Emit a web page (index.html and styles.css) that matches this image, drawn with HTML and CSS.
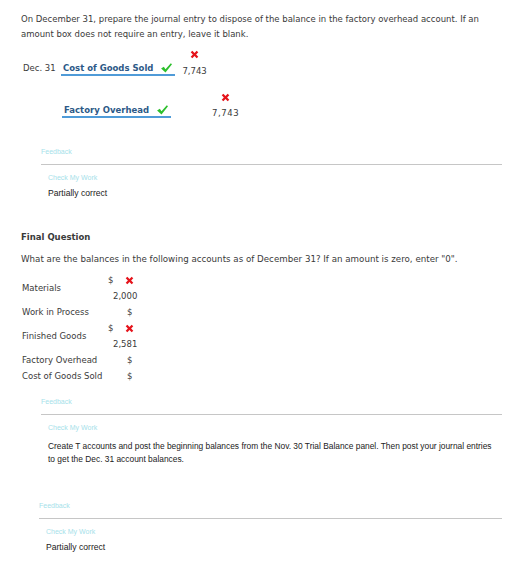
FILE: index.html
```html
<!DOCTYPE html>
<html lang="en">
<head>
    <meta charset="UTF-8">
    <title>Journal Entry</title>
    <link rel="stylesheet" href="styles.css">
</head>
<body>
    <div class="page">
        <p class="prompt">On December 31, prepare the journal entry to dispose of the balance in the factory overhead account. If an amount box does not require an entry, leave it blank.</p>

        <div class="journal">
            <div class="entry">
                <span class="date">Dec. 31</span>
                <span class="account">Cost of Goods Sold
                    <svg class="check" viewBox="0 0 14 12"><path d="M0.5 6.5 L3.8 4.6 L5.8 7.6 L12.2 0.4 L13.6 1.6 L5.8 11.5 Z"/></svg>
                </span>
                <span class="amount">
                    <svg class="wrong" viewBox="0 0 10 10"><path d="M0.8 2.6 L2.6 0.8 L5 3.2 L7.4 0.8 L9.2 2.6 L6.8 5 L9.2 7.4 L7.4 9.2 L5 6.8 L2.6 9.2 L0.8 7.4 L3.2 5 Z"/></svg>
                    <span class="figure">7,743</span>
                </span>
            </div>
            <div class="entry credit">
                <span class="account">Factory Overhead
                    <svg class="check" viewBox="0 0 14 12"><path d="M0.5 6.5 L3.8 4.6 L5.8 7.6 L12.2 0.4 L13.6 1.6 L5.8 11.5 Z"/></svg>
                </span>
                <span class="amount">
                    <svg class="wrong" viewBox="0 0 10 10"><path d="M0.8 2.6 L2.6 0.8 L5 3.2 L7.4 0.8 L9.2 2.6 L6.8 5 L9.2 7.4 L7.4 9.2 L5 6.8 L2.6 9.2 L0.8 7.4 L3.2 5 Z"/></svg>
                    <span class="figure spaced">7,743</span>
                </span>
            </div>
        </div>

        <div class="feedback">
            <div class="feedback-title">Feedback</div>
            <div class="feedback-body">
                <div class="check-work">Check My Work</div>
                <p>Partially correct</p>
            </div>
        </div>

        <h2 class="question-title">Final Question</h2>
        <p class="prompt question">What are the balances in the following accounts as of December 31? If an amount is zero, enter "0".</p>

        <div class="balances">
            <div class="label">Materials</div>
            <div class="cell">
                <span class="line"><span class="dollar">$</span><svg class="wrong" viewBox="0 0 10 10"><path d="M0.8 2.6 L2.6 0.8 L5 3.2 L7.4 0.8 L9.2 2.6 L6.8 5 L9.2 7.4 L7.4 9.2 L5 6.8 L2.6 9.2 L0.8 7.4 L3.2 5 Z"/></svg></span>
                <span class="value">2,000</span>
            </div>
            <div class="label">Work in Process</div>
            <div class="cell plain"><span class="dollar">$</span></div>
            <div class="label">Finished Goods</div>
            <div class="cell">
                <span class="line"><span class="dollar">$</span><svg class="wrong" viewBox="0 0 10 10"><path d="M0.8 2.6 L2.6 0.8 L5 3.2 L7.4 0.8 L9.2 2.6 L6.8 5 L9.2 7.4 L7.4 9.2 L5 6.8 L2.6 9.2 L0.8 7.4 L3.2 5 Z"/></svg></span>
                <span class="value">2,581</span>
            </div>
            <div class="label">Factory Overhead</div>
            <div class="cell plain"><span class="dollar">$</span></div>
            <div class="label">Cost of Goods Sold</div>
            <div class="cell plain"><span class="dollar">$</span></div>
        </div>

        <div class="feedback hint">
            <div class="feedback-title">Feedback</div>
            <div class="feedback-body">
                <div class="check-work">Check My Work</div>
                <p class="hint-text">Create T accounts and post the beginning balances from the Nov. 30 Trial Balance panel. Then post your journal entries to get the Dec. 31 account balances.</p>
            </div>
        </div>

        <div class="feedback last">
            <div class="feedback-title">Feedback</div>
            <div class="feedback-body">
                <div class="check-work">Check My Work</div>
                <p>Partially correct</p>
            </div>
        </div>
    </div>
</body>
</html>
```

FILE: styles.css
```css
body {
    margin: 0;
    background-color: #fff;
    color: #3a3a3a;
    font-family: 'DejaVu Sans', Verdana, sans-serif;
    font-size: 8.5px;
}

.page {
    padding: 12px 30px 0 21px;
}

.prompt {
    margin: 0;
    line-height: 15px;
}

/* journal entry rows */
.journal {
    margin-top: 8px;
    padding-left: 2px;
}

.entry {
    display: flex;
    align-items: flex-end;
}

.entry.credit {
    margin-top: 17px;
    padding-left: 39px;
}

.date {
    width: 38px;
    line-height: 10px;
    padding-bottom: 3px;
}

.account {
    display: flex;
    align-items: center;
    gap: 7px;
    line-height: 10px;
    padding: 0 2px 1px 2px;
    border-bottom: 2px solid #4f9bd8;
    color: #2c5987;
    font-weight: bold;
}

.check {
    width: 13px;
    height: 10px;
    fill: #2cbf2c;
}

.amount {
    display: flex;
    flex-direction: column;
    align-items: center;
    gap: 7px;
    margin-left: 7px;
}

.credit .amount {
    margin-left: 41px;
    gap: 6px;
}

.figure {
    line-height: 10px;
}

.figure.spaced {
    letter-spacing: 0.6px;
}

.wrong {
    width: 9px;
    height: 9px;
    fill: #e5131b;
}

/* feedback panels */
.feedback {
    margin: 30px 0 0 20px;
    font-family: 'Liberation Sans', Arial, sans-serif;
}

.feedback-title {
    color: #a6e1ea;
    font-size: 7px;
    line-height: 8px;
    padding-bottom: 8px;
    border-bottom: 1px solid #c6c6c6;
}

.feedback-body {
    padding: 9px 0 0 7px;
}

.check-work {
    color: #a6e1ea;
    font-size: 7px;
    line-height: 8px;
}

.feedback-body p {
    margin: 5px 0 0;
    font-size: 8.6px;
    line-height: 13px;
    color: #222;
}

.feedback-body .hint-text {
    margin-top: 8px;
    padding-right: 4px;
    font-size: 8.4px;
}

.question-title {
    margin: 32px 0 0;
    font-size: 8.5px;
    line-height: 10px;
    font-weight: bold;
}

.prompt.question {
    margin-top: 10px;
    font-size: 8.7px;
}

/* account balances */
.balances {
    display: grid;
    grid-template-columns: 86px auto;
    justify-content: start;
    align-items: center;
    margin-top: 5px;
    padding-left: 1px;
    line-height: 16px;
}

.cell {
    display: flex;
    flex-direction: column;
    align-items: flex-start;
}

.line {
    display: flex;
    align-items: center;
    gap: 12px;
}

.value {
    margin-left: 5px;
}

.cell.plain {
    padding-left: 19px;
}

.feedback.hint {
    margin-top: 14px;
}

.feedback.last {
    margin: 36px 0 0 18px;
}
```
